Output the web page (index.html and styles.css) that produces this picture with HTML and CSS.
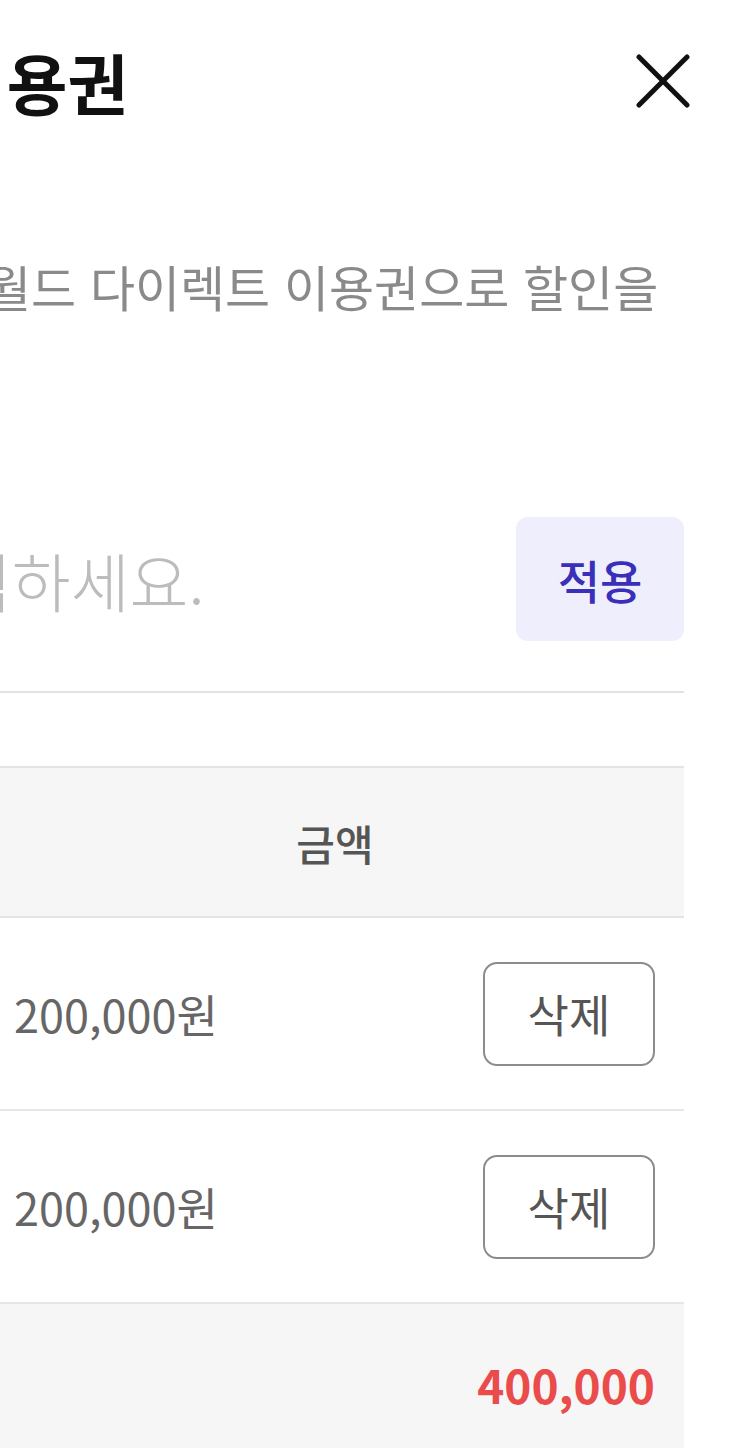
FILE: index.html
```html
<!DOCTYPE html>
<html lang="ko">
<head>
<meta charset="utf-8">
<title>이용권</title>
<link rel="stylesheet" href="styles.css">
</head>
<body>
<div class="sheet">
  <header class="head">
    <h1 class="title">이용권</h1>
    <button class="close" aria-label="닫기">
      <svg viewBox="0 0 54 54" width="54" height="54"><path d="M3 3 L51 51 M51 3 L3 51" stroke="#111" stroke-width="5" stroke-linecap="round" fill="none"/></svg>
    </button>
  </header>
  <p class="desc">월드 다이렉트 이용권으로 할인을</p>
  <div class="input-row">
    <span class="placeholder">입력하세요.</span>
    <button class="apply">적용</button>
  </div>
  <div class="table">
    <div class="thead">금액</div>
    <div class="trow">
      <span class="amount">200,000원</span>
      <button class="del">삭제</button>
    </div>
    <div class="trow">
      <span class="amount">200,000원</span>
      <button class="del">삭제</button>
    </div>
    <div class="tsum">400,000</div>
  </div>
</div>
</body>
</html>
```
FILE: styles.css
```css
html, body {
  margin: 0;
  padding: 0;
  background: #fff;
  overflow: hidden;
}
body {
  font-family: "Noto Sans CJK KR", "Noto Sans", sans-serif;
  width: 750px;
  height: 1448px;
}
.sheet {
  width: 684px;
}
.head {
  height: 162px;
  display: flex;
  align-items: center;
  justify-content: space-between;
}
.title {
  margin: 0 0 0 -54px;
  font-size: 66px;
  font-weight: 700;
  color: #111;
  line-height: 1;
  white-space: nowrap;
}
.close {
  margin-right: -6px;
  padding: 0;
  border: 0;
  background: none;
  width: 54px;
  height: 54px;
  display: block;
}
.close svg { display: block; }
.desc {
  margin: 92px 0 0 -14px;
  font-size: 49px;
  line-height: 64px;
  color: #8a8a8a;
  white-space: nowrap;
}
.input-row {
  margin-top: 199px;
  display: flex;
  justify-content: space-between;
  align-items: center;
  padding-bottom: 50px;
  border-bottom: 2px solid #e2e2e2;
}
.placeholder {
  margin-left: -106px;
  font-size: 64px;
  font-weight: 300;
  color: #bcbcbc;
  white-space: nowrap;
}
.apply {
  width: 168px;
  height: 124px;
  border: 0;
  border-radius: 12px;
  background: #efeefc;
  color: #3a2fb8;
  font-family: inherit;
  font-size: 46px;
  font-weight: 500;
  padding: 0;
}
.table {
  margin-top: 73px;
  border-top: 2px solid #e4e4e4;
}
.thead {
  height: 148px;
  display: flex;
  align-items: center;
  justify-content: center;
  padding-right: 14px;
  background: #f6f6f6;
  border-bottom: 2px solid #e4e4e4;
  font-size: 42px;
  font-weight: 500;
  color: #555;
}
.trow {
  height: 191px;
  display: flex;
  align-items: center;
  justify-content: space-between;
  padding: 0 29px 0 14px;
  border-bottom: 2px solid #e6e6e6;
}
.amount {
  font-size: 45px;
  color: #666;
}
.del {
  width: 172px;
  height: 104px;
  border: 2px solid #8c8c8c;
  border-radius: 14px;
  background: #fff;
  color: #555;
  font-family: inherit;
  font-size: 45px;
  padding: 0;
}
.tsum {
  height: 160px;
  display: flex;
  align-items: center;
  justify-content: flex-end;
  padding-right: 29px;
  background: #f6f6f6;
  font-size: 46px;
  font-weight: 700;
  color: #ea4b4b;
}
```
